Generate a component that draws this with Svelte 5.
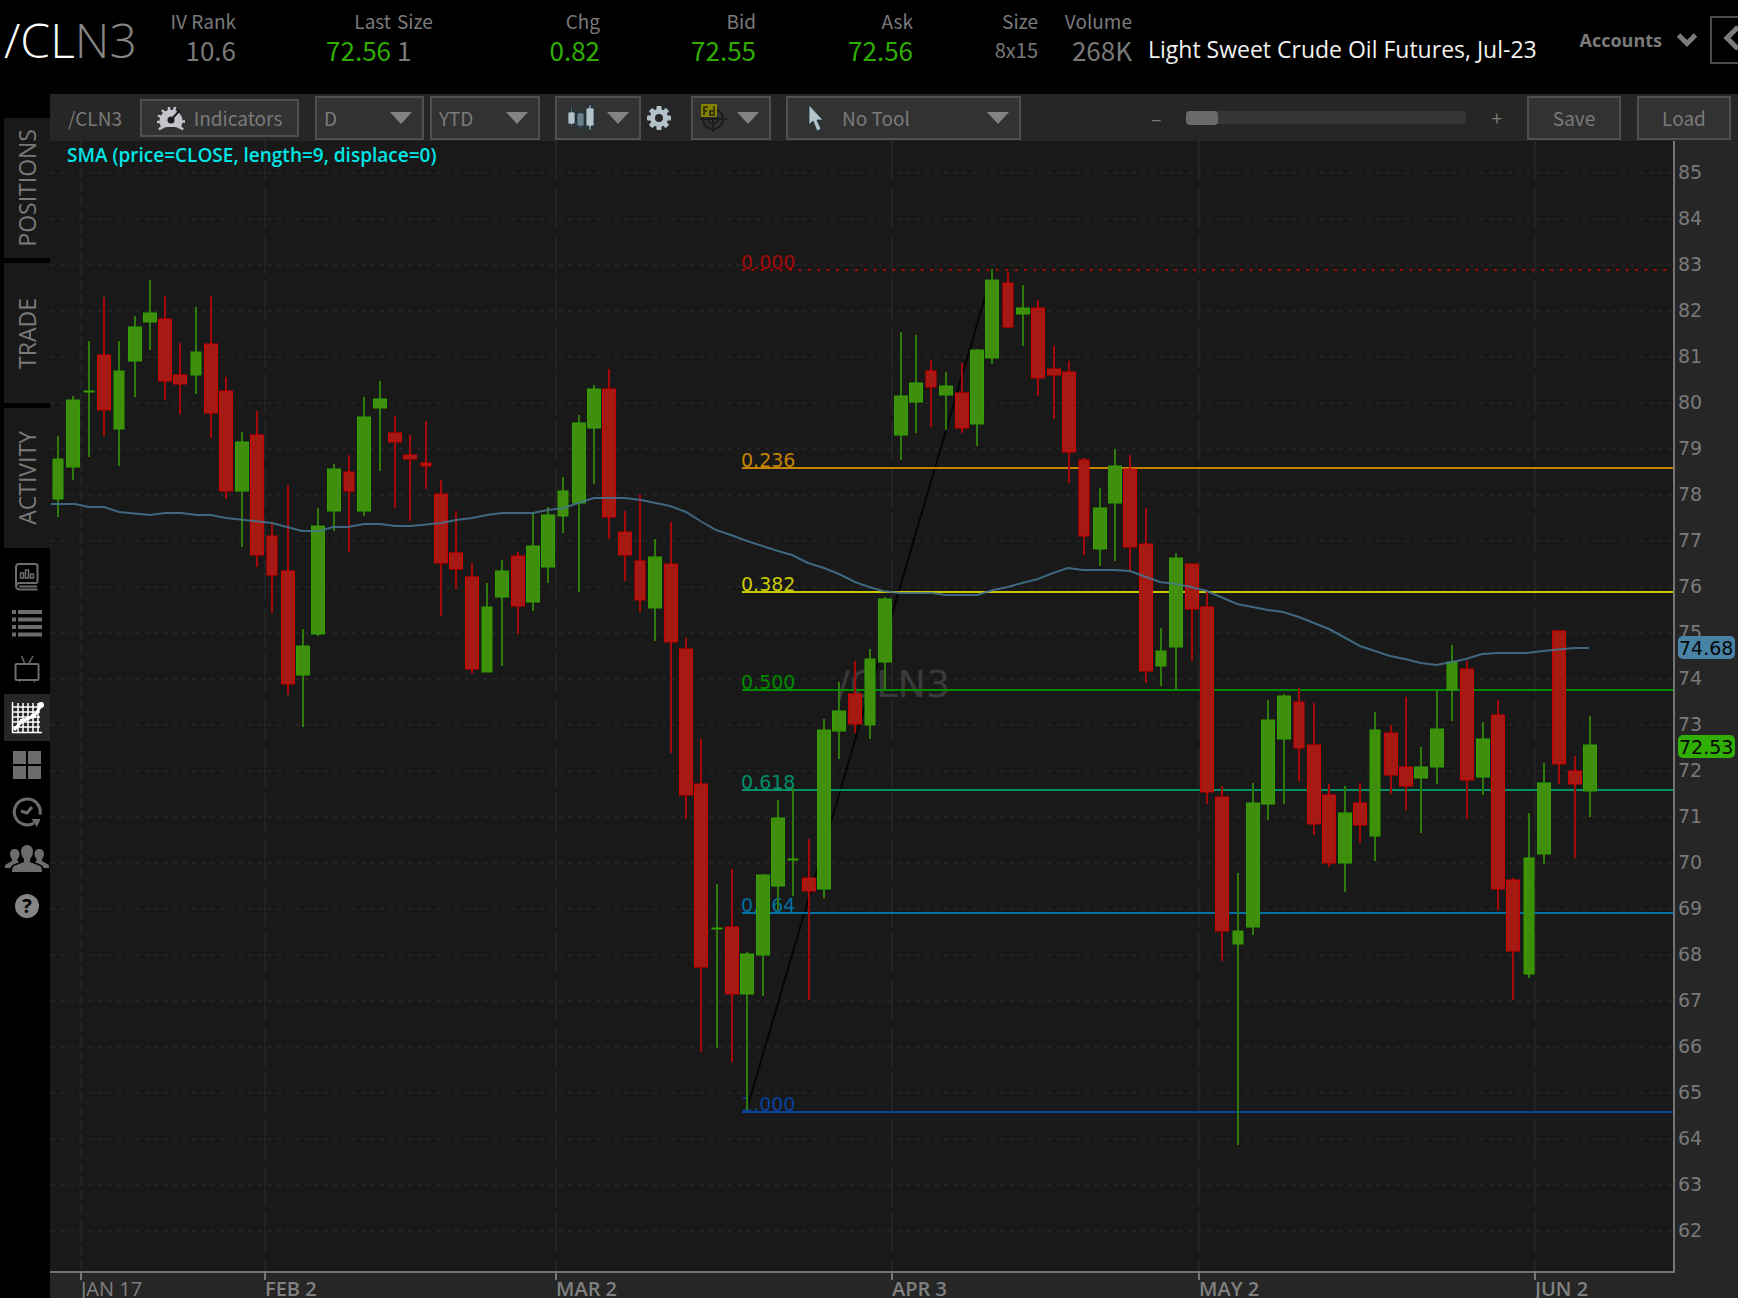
<script>
  const quotes = [
    { label: 'IV Rank', value: '10.6' },
    { label: 'Last', value: '72.56', up: true },
    { label: 'Size', value: '1', left: true },
    { label: 'Chg', value: '0.82', up: true },
    { label: 'Bid', value: '72.55', up: true },
    { label: 'Ask', value: '72.56', up: true },
    { label: 'Size', value: '8x15', small: true },
    { label: 'Volume', value: '268K' }
  ];

  const tabs = ['POSITIONS', 'TRADE', 'ACTIVITY'];

  let interval = $state('D');
  let range = $state('YTD');
  let tool = $state('No Tool');
  let zoom = $state(0);

  // Plot area in chart units
  const left = 50;
  const right = 1674;
  const top = 141;
  const bottom = 1272;

  const priceY = (p) => Math.round(173 + (85 - p) * 46);
  const prices = Array.from({ length: 24 }, (_, i) => 85 - i);

  const months = [
    { x: 81, text: 'JAN 17', minor: true },
    { x: 265, text: 'FEB 2' },
    { x: 556, text: 'MAR 2' },
    { x: 892, text: 'APR 3' },
    { x: 1199, text: 'MAY 2' },
    { x: 1535, text: 'JUN 2' }
  ];

  const levels = [
    { y: 270, text: '0.000', color: '#a50a0a', dotted: true },
    { y: 468, text: '0.236', color: '#c58400' },
    { y: 592, text: '0.382', color: '#c9c900' },
    { y: 690, text: '0.500', color: '#008a00' },
    { y: 790, text: '0.618', color: '#00906a' },
    { y: 913, text: '0.764', color: '#0070a0' },
    { y: 1112, text: '1.000', color: '#0a429c' }
  ];

  // direction, high, body top, body bottom, low
  const bars = [
    ['g', 436, 459, 499, 517], ['g', 396, 400, 467, 480], ['g', 341, 391, 392, 457],
    ['r', 297, 355, 410, 436], ['g', 341, 371, 429, 466], ['g', 316, 327, 361, 397],
    ['g', 280, 313, 322, 350], ['r', 296, 319, 381, 400], ['r', 343, 375, 384, 414],
    ['g', 307, 352, 375, 394], ['r', 296, 344, 413, 438], ['r', 377, 391, 491, 499],
    ['g', 432, 442, 491, 547], ['r', 411, 435, 555, 567], ['r', 523, 536, 575, 613],
    ['r', 485, 571, 684, 695], ['g', 629, 646, 675, 727], ['g', 508, 526, 634, 636],
    ['g', 464, 469, 511, 531], ['r', 455, 472, 491, 552], ['g', 397, 417, 511, 516],
    ['g', 381, 399, 408, 471], ['r', 416, 433, 442, 508], ['r', 435, 455, 459, 521],
    ['r', 421, 463, 466, 489], ['r', 480, 494, 563, 616], ['r', 511, 553, 569, 589],
    ['r', 563, 577, 669, 674], ['g', 583, 607, 672, 672], ['g', 560, 571, 597, 666],
    ['r', 552, 556, 606, 634], ['g', 513, 546, 602, 611], ['g', 507, 515, 567, 583],
    ['g', 477, 491, 516, 533], ['g', 415, 423, 503, 592], ['g', 385, 389, 428, 484],
    ['r', 369, 389, 517, 539], ['r', 511, 532, 555, 581], ['r', 494, 561, 600, 612],
    ['g', 539, 557, 608, 641], ['r', 522, 564, 642, 753], ['r', 638, 649, 795, 819],
    ['r', 739, 784, 967, 1052], ['g', 884, 928, 929, 1048], ['r', 869, 927, 994, 1062],
    ['g', 952, 954, 994, 1110], ['g', 874, 875, 955, 996], ['g', 800, 818, 886, 910],
    ['g', 788, 859, 860, 896], ['r', 839, 878, 891, 1000], ['g', 719, 730, 889, 898],
    ['g', 682, 711, 731, 759], ['r', 661, 694, 724, 733], ['g', 649, 659, 725, 739],
    ['g', 597, 599, 662, 690], ['g', 332, 396, 435, 460], ['g', 335, 383, 402, 433],
    ['r', 360, 371, 387, 427], ['g', 372, 386, 395, 430], ['r', 363, 393, 428, 433],
    ['g', 349, 350, 424, 446], ['g', 269, 280, 358, 364], ['r', 272, 283, 327, 328],
    ['g', 285, 308, 314, 346], ['r', 300, 308, 378, 396], ['r', 346, 369, 375, 419],
    ['r', 361, 372, 452, 483], ['r', 458, 460, 536, 555], ['g', 488, 508, 549, 566],
    ['g', 449, 466, 503, 561], ['r', 455, 469, 547, 572], ['r', 508, 544, 671, 683],
    ['g', 628, 651, 666, 686], ['g', 553, 558, 647, 689], ['r', 564, 564, 609, 661],
    ['r', 590, 607, 792, 804], ['r', 786, 797, 931, 961], ['g', 873, 931, 944, 1145],
    ['g', 783, 803, 927, 935], ['g', 700, 720, 804, 820], ['g', 694, 696, 739, 804],
    ['r', 688, 702, 748, 781], ['r', 703, 745, 824, 835], ['r', 784, 795, 863, 867],
    ['g', 786, 813, 863, 892], ['r', 783, 803, 825, 843], ['g', 712, 730, 836, 861],
    ['r', 725, 733, 775, 794], ['r', 697, 767, 786, 810], ['g', 747, 767, 778, 833],
    ['g', 690, 729, 767, 784], ['g', 645, 662, 690, 721], ['r', 661, 669, 780, 819],
    ['g', 722, 739, 777, 795], ['r', 700, 715, 889, 910], ['r', 878, 880, 951, 1000],
    ['g', 813, 858, 974, 978], ['g', 763, 783, 854, 864], ['r', 630, 631, 764, 784],
    ['r', 756, 771, 784, 858], ['g', 716, 745, 791, 817]
  ];
  const slim = new Set([0, 2, 4, 9, 14, 19, 24, 28, 33, 38, 43, 48, 53, 57, 62, 67, 72, 77, 81, 86, 91, 96]);

  const candles = bars.map(([dir, high, open, close, low], i) => ({
    dir, high, low, open,
    x: Math.round(57.9 + i * 15.32),
    w: slim.has(i) ? 11 : 14,
    h: close - open
  }));

  const sma = `51,504 75,504 89,507 104,507 119,512 150,515 165,513 181,513 197,515 211,515 226,518
    272,523 287,527 302,531 319,531 333,527 348,527 364,524 380,524 395,526 411,526 441,523 456,520
    472,518 487,515 502,513 533,513 548,510 564,508 578,503 594,498 625,498 641,500 670,506 686,512
    702,522 716,530 731,535 747,541 778,551 792,555 808,563 824,568 839,574 855,582 869,587 883,591
    900,593 932,593 945,595 977,595 993,590 1008,587 1022,583 1038,579 1053,573 1068,568 1083,570
    1115,570 1130,571 1146,577 1160,582 1176,584 1191,587 1207,591 1237,604 1268,610 1283,612
    1299,617 1329,629 1360,646 1390,656 1405,659 1421,663 1436,665 1452,662 1466,659 1482,654
    1498,653 1527,653 1543,651 1574,648 1589,648`;
</script>

{#snippet arrow()}
  <svg class="arrow" viewBox="0 0 22 12" aria-hidden="true"><path d="M0 0h22L11 12z" /></svg>
{/snippet}

<div class="app">
  <header>
    <h1>/CL<span>N3</span></h1>
    {#each quotes as q}
      <div class="quote" class:left={q.left}>
        <span class="label">{q.label}</span>
        <span class="value" class:up={q.up} class:small={q.small}>{q.value}</span>
      </div>
    {/each}
    <p class="name">Light Sweet Crude Oil Futures, Jul-23</p>
    <button class="accounts">
      Accounts
      <svg width="22" height="16" viewBox="0 0 22 16"><path d="M2.500 3 11 11.500 19.500 3" /></svg>
    </button>
    <button class="collapse" aria-label="Collapse panel">
      <svg width="20" height="26" viewBox="0 0 20 26"><path d="M16 2 5 13 16 24" /></svg>
    </button>
  </header>

  <div class="body">
    <nav>
      {#each tabs as tab}
        <button class="tab"><span>{tab}</span></button>
      {/each}
      <div class="icons">
        <button aria-label="Reports">
          <svg width="24" height="28" viewBox="0 0 24 28">
            <g class="line">
              <path d="M22.500 19.500V3a2 2 0 0 0-2-2H4a3 3 0 0 0-3 3v19a3.500 3.500 0 0 0 3.500 3.500h18M22.500 20H4.500a3 3 0 0 0-3 3M4 23.500h18" />
              <path stroke-width="1.500" d="M5.500 15v-5h3v5zM10.500 15V7h3v8zM15.500 15v-4h3v4z" />
            </g>
          </svg>
        </button>
        <button aria-label="Watchlist">
          <svg width="30" height="27" viewBox="0 0 30 27">
            {#each [0, 7.5, 15, 22.5] as y}
              <rect x="0" y={y} width="4" height="4" /><rect x="6" y={y} width="24" height="4" />
            {/each}
          </svg>
        </button>
        <button aria-label="Live TV">
          <svg width="26" height="31" viewBox="0 0 26 31">
            <g class="line"><rect x="1.500" y="9" width="23" height="16" rx="1" /><path stroke-width="1.500" d="m7.500 1 3 7M19 1l-4 7M5 26.500h1M20 26.500h1" /></g>
          </svg>
        </button>
        <button class="active" aria-label="Charts">
          <svg width="33" height="33" viewBox="0 0 33 33">
            <path class="grid" d="M1.500 1v30.500H31M7 2v29M12 2v29M17 2v29M22 2v29M27 2v29M2 6h27M2 11h27M2 16h27M2 21h27M2 26h27" />
            <path class="trend" d="m3 29 8-9 12-5 7-10" />
            <circle cx="11" cy="20" r="2.500" /><circle cx="22" cy="15" r="2.500" /><circle cx="30" cy="4" r="3" />
          </svg>
        </button>
        <button aria-label="Layouts">
          <svg width="28" height="28" viewBox="0 0 28 28"><path d="M0 0h13v13H0zM15 0h13v13H15zM0 15h13v13H0zM15 15h13v13H15z" /></svg>
        </button>
        <button aria-label="History">
          <svg width="30" height="30" viewBox="0 0 30 30">
            <g class="thick"><path d="M22 26A13 13 0 1 1 28 17.500" /><path d="m9 14 6 2 5-6" /></g>
            <path d="M19.500 22h9L25 30z" />
          </svg>
        </button>
        <button aria-label="Community">
          <svg width="44" height="28" viewBox="0 0 44 28">
            <path d="M22 0a6 6 0 0 1 6 6c0 3-1 6-3 8v3l10 4q2 1 2 6H7q0-5 2-6l10-4v-3c-2-2-3-5-3-8a6 6 0 0 1 6-6z" />
            <path d="M10 4a4.500 4.500 0 0 1 4.500 5c0 2-1 4-2 5v2l2 1-7 3c-1 1-2 2-2 3H0v-3l7-4v-2c-1-1-2-3-2-5a4.500 4.500 0 0 1 5-5zM34 4a4.500 4.500 0 0 0-4.500 5c0 2 1 4 2 5v2l-2 1 7 3c1 1 2 2 2 3H44v-3l-7-4v-2c1-1 2-3 2-5a4.500 4.500 0 0 0-5-5z" />
          </svg>
        </button>
        <button class="help" aria-label="Help"><i>?</i></button>
      </div>
    </nav>

    <main>
      <div class="toolbar">
        <span class="symbol">/CLN3</span>
        <button class="box indicators">
          <svg width="28" height="26" viewBox="0 0 28 26">
            <path class="ticks" d="M5 22 2 24.500M4.500 17H0M5 12.500 1 10.500M8 8.500 5 5M12 6.500V2M17 6.500l1-4.500M23 22l3 2.500M23.500 16.500H28" />
            <path class="dial" d="M5.500 24a11.500 11.500 0 1 1 17 0q-2-2-5-2h-7q-3 0-5 2z" />
            <circle class="hub" cx="14" cy="15" r="3.500" /><path class="needle" d="m14 15 9-10" />
          </svg>
          Indicators
        </button>
        <label class="box drop interval">
          <select bind:value={interval} aria-label="Interval"><option>D</option><option>W</option><option>M</option></select>
          {@render arrow()}
        </label>
        <label class="box drop range">
          <select bind:value={range} aria-label="Range"><option>YTD</option><option>1Y</option></select>
          {@render arrow()}
        </label>
        <button class="box menu style" aria-label="Chart style" aria-haspopup="menu">
          <svg width="28" height="28" viewBox="0 0 28 28">
            <path class="steel" d="M4 3h1v5h3v12H5v3H4v-3H1V8h3zM22 1h2v3h3v18h-3v4h-2v-4h-3V4h3z" />
            <path class="steel dim" d="M13 5h1v4h3v13h-3v5h-1v-5h-3V9h3z" />
          </svg>
          {@render arrow()}
        </button>
        <button class="gear" aria-label="Chart settings">
          <svg width="24" height="24" viewBox="0 0 24 24">
            {#each [0, 45, 90, 135, 180, 225, 270, 315] as a}
              <rect class="steel" x="9.500" y="0" width="5" height="6" rx="1" transform="rotate({a} 12 12)" />
            {/each}
            <circle class="wheel" cx="12" cy="12" r="6.500" />
          </svg>
        </button>
        <button class="box menu drawing" aria-label="Drawing set" aria-haspopup="menu">
          <svg width="28" height="30" viewBox="0 0 28 30">
            <g class="target"><circle cx="13" cy="16" r="10" /><circle cx="13" cy="16" r="5" /><path d="M13 4v25M0 16h27" /></g>
            <rect class="flag" x="1" y="1" width="16" height="13" />
            <path class="flagmark" d="M4 12V4h4M4 8h3M10 8h4v4h-4zM14 3v9" />
          </svg>
          {@render arrow()}
        </button>
        <label class="box drop tool">
          <svg class="pointer" width="16" height="26" viewBox="0 0 16 26"><path class="steel" d="M1 0v20l4-4 4 10 4-2-4-9h6z" /></svg>
          <select bind:value={tool} aria-label="Drawing tool"><option>No Tool</option><option>Trendline</option></select>
          {@render arrow()}
        </label>
        <div class="zoom">
          <button aria-label="Zoom out">–</button>
          <input type="range" min="0" max="100" bind:value={zoom} aria-label="Zoom" />
          <button aria-label="Zoom in">+</button>
        </div>
        <button class="box save">Save</button>
        <button class="box save">Load</button>
      </div>

      <svg class="chart" viewBox="50 141 1688 1157" role="img" aria-label="/CLN3 daily candles">
        <rect class="plot" x={left} y={top} width={right - left} height={bottom - top} />

        <!-- Grid -->
        {#each prices as p}
          <path class="hline" d="M{left + 1} {priceY(p)}H{right}" />
        {/each}
        {#each months as m}
          <path class="vline" class:minor={m.minor} d="M{m.x} {top}V{bottom}" />
        {/each}

        <text class="watermark" x="837" y="697">/CLN3</text>

        <!-- Fibonacci retracement -->
        <path class="fibtrend" d="M746 1112 993 270" />
        {#each levels as l}
          <path class="level" class:dotted={l.dotted} stroke={l.color} d="M742 {l.y}H{right}" />
          <text class="digits" x="741" y={l.y - 1} fill={l.color}>{l.text}</text>
        {/each}

        <!-- Candles -->
        {#each candles as c}
          <g class={c.dir}>
            <path class="wick" d="M{c.x} {c.high}V{c.low}" />
            <rect class="candle" x={c.x - c.w / 2 + 0.5} y={c.open} width={c.w - 1} height={c.h} />
          </g>
        {/each}

        <polyline class="sma" points={sma} />
        <text class="study" x="67" y="162">SMA (price=CLOSE, length=9, displace=0)</text>

        <!-- Axes -->
        <path class="axis" d="M{right} {top}V{bottom}H{left}" />
        {#each prices as p}
          <text class="digits price" x="1678" y={priceY(p) + 6}>{p}</text>
        {/each}
        {#each months as m}
          <path class="tick" d="M{m.x} {bottom}v8" />
          <text class="month" class:minor={m.minor} x={m.x} y="1296">{m.text}</text>
        {/each}

        <rect class="tag-sma" x="1678" y="636" width="57" height="23" rx="5" />
        <text class="digits tag" x="1679" y="655">74.68</text>
        <rect class="tag-last" x="1678" y="735" width="57" height="23" rx="5" />
        <text class="digits tag" x="1679" y="754">72.53</text>
      </svg>
    </main>
  </div>
</div>

<style>
  :global(body) { background: #000; }

  .app {
    background: #000;
    color: #7a7a7a;
    font-family: 'Noto Sans CJK SC', 'Open Sans', sans-serif;
    overflow: hidden;
  }

  button, select {
    background: none;
    border: 0;
    padding: 0;
    color: inherit;
    font: inherit;
  }

  svg { flex: none; }

  /* Quote header */
  header {
    display: grid;
    grid-template-columns: 140px 96px 155px 44px 165px 156px 157px 125px 94px 1fr auto 28px;
    height: 94px;
  }
  h1 {
    margin: 0;
    padding-left: 4px;
    color: #fff;
    font: 300 48px/80px 'Open Sans', sans-serif;
  }
  h1 span { color: #858585; }
  .quote {
    display: flex;
    flex-direction: column;
    align-items: flex-end;
    padding-top: 7px;
  }
  .quote.left { align-items: flex-start; padding-left: 6px; }
  .label { font-size: 19px; line-height: 27px; }
  .value { font-size: 26px; line-height: 32px; }
  .value.small { font-size: 20px; }
  .up { color: #2fae00; }
  .name {
    margin: 0;
    padding-left: 16px;
    color: #f2f2f2;
    font: 23px/98px 'Open Sans', sans-serif;
    white-space: nowrap;
  }
  .accounts {
    display: flex;
    align-items: center;
    gap: 14px;
    height: 80px;
    margin-right: 12px;
    font: 700 18px 'Open Sans', sans-serif;
  }
  .accounts path, .collapse path { fill: none; stroke: #7a7a7a; stroke-width: 5; }
  .collapse {
    height: 48px;
    margin-top: 16px;
    border: 2px solid #4c4c4c;
    border-right: 0;
    padding-left: 10px;
    text-align: left;
  }

  .body { display: flex; }

  /* Sidebar */
  nav {
    display: flex;
    flex-direction: column;
    gap: 5px;
    width: 46px;
    padding: 24px 0 0 4px;
  }
  .tab {
    display: flex;
    align-items: center;
    justify-content: center;
    height: 140px;
    background: #191919;
    font: 23px/46px 'Open Sans', sans-serif;
  }
  .tab span {
    writing-mode: vertical-rl;
    transform: rotate(180deg);
  }
  .icons { display: flex; flex-direction: column; }
  .icons button {
    display: flex;
    align-items: center;
    justify-content: center;
    height: 47px;
  }
  .icons svg { fill: #6c6c6c; }
  .icons .line { fill: none; stroke: #6c6c6c; stroke-width: 2; }
  .icons .thick { fill: none; stroke: #6c6c6c; stroke-width: 3; }
  .icons .active { background: #262626; }
  .icons .active svg { fill: #fff; }
  .grid { fill: none; stroke: #fff; stroke-width: 1.5; }
  .trend { fill: none; stroke: #fff; stroke-width: 3; }
  .help i {
    width: 24px;
    border-radius: 12px;
    background: #858585;
    color: #000;
    font: 700 20px/24px 'Open Sans', sans-serif;
  }

  /* Toolbar */
  main { flex: 1; min-width: 0; background: #262626; }
  .toolbar {
    display: flex;
    align-items: center;
    height: 47px;
    padding-right: 7px;
    font-size: 19px;
    white-space: nowrap;
  }
  .symbol { width: 90px; box-sizing: border-box; padding-left: 18px; }
  .box {
    box-sizing: border-box;
    height: 44px;
    border: 2px solid #505050;
    background: #323232;
  }
  .indicators {
    display: flex;
    align-items: center;
    justify-content: center;
    gap: 9px;
    width: 159px;
    height: 38px;
    margin-right: 16px;
  }
  .drop, .menu {
    display: flex;
    align-items: center;
    justify-content: space-between;
    padding: 0 10px 0 7px;
  }
  .drop select { flex: 1; align-self: stretch; min-width: 0; appearance: none; outline: 0; }
  .arrow { width: 22px; height: 12px; fill: #838383; }
  .interval { width: 109px; margin-right: 6px; }
  .range { width: 110px; margin-right: 15px; }
  .style { width: 86px; margin-right: 6px; padding-left: 10px; }
  .gear { display: flex; margin-right: 20px; }
  .drawing { width: 80px; margin-right: 15px; }
  .tool { width: 235px; padding-left: 20px; gap: 18px; }
  .zoom {
    display: flex;
    flex: 1;
    align-items: center;
    justify-content: flex-end;
    gap: 25px;
    margin-right: 25px;
  }
  .zoom input {
    width: 280px;
    height: 13px;
    margin: 0;
    border-radius: 4px;
    background: #363636;
    appearance: none;
  }
  .zoom input::-webkit-slider-thumb {
    width: 32px;
    height: 14px;
    border-radius: 4px;
    background: #6a6a6a;
    appearance: none;
  }
  .save { width: 94px; }
  .save + .save { margin-left: 16px; }

  .dial { fill: #c4c4cc; }
  .ticks { stroke: #c4c4cc; stroke-width: 2.5; }
  .hub { fill: #1c1c1c; }
  .needle { stroke: #1c1c1c; stroke-width: 2; }
  .steel { fill: #b4c3c9; stroke: #16323f; stroke-width: 0.8; }
  .steel.dim { fill: #6b8189; }
  .gear .steel { stroke: none; }
  .wheel { fill: none; stroke: #b4c3c9; stroke-width: 5; }
  .target { fill: none; stroke: #1c1c1c; stroke-width: 2; }
  .flag { fill: #858200; }
  .flagmark { fill: none; stroke: #38380a; stroke-width: 2; }

  /* Chart */
  .chart { display: block; width: 100%; height: auto; }
  .plot { fill: #191919; }
  .hline { stroke: #232323; stroke-width: 2; stroke-dasharray: 4 5.4; }
  .vline { stroke: #232323; stroke-width: 2; stroke-dasharray: 40 6.6; }
  .vline.minor { stroke-dasharray: 9 5; }
  .watermark { fill: #3a3a3a; font: 38px 'DejaVu Sans', sans-serif; }
  .fibtrend { stroke: #050505; stroke-width: 2; }
  .level { stroke-width: 2; }
  .level.dotted { stroke-dasharray: 3 6.4; }
  .digits { font: 19px 'DejaVu Sans', sans-serif; }
  .wick { stroke-width: 2; }
  .g .wick { stroke: #2f7a0c; }
  .g .candle { fill: #3f8f0c; stroke: #33a000; }
  .r .wick { stroke: #a50808; }
  .r .candle { fill: #a61a14; stroke: #cc0000; }
  .candle { stroke-width: 1; }
  .sma { fill: none; stroke: #477590; stroke-width: 2; stroke-opacity: 0.85; }
  .study { fill: #00e6e6; font: 600 19px 'Open Sans', sans-serif; }
  .axis, .tick { fill: none; stroke: #747474; stroke-width: 2; }
  .price { fill: #7a7a7a; }
  .month { fill: #808080; font: 600 20px 'Open Sans', sans-serif; }
  .month.minor { font-weight: 400; }
  .tag { fill: #060606; }
  .tag-sma { fill: #4883a6; }
  .tag-last { fill: #31ae04; }
</style>
